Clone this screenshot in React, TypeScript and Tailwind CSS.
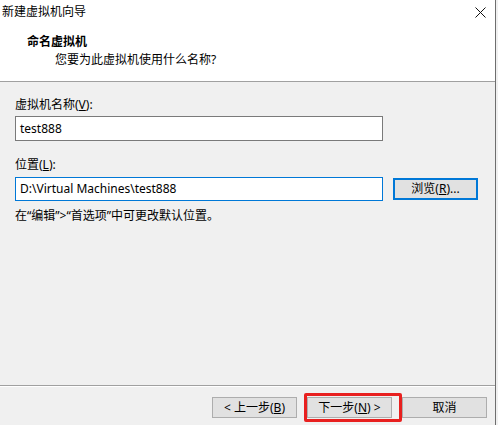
export default function App() {
  const font = 'font-["Noto_Sans","Noto_Sans_CJK_SC",sans-serif]';
  const btn =
    "h-[21px] w-[85px] bg-[#e1e1e1] border border-[#adadad] flex items-center justify-center text-[12px] text-black leading-none";

  return (
    <div className={`w-[498px] h-[425px] flex bg-[#f0f0f0] text-[12px] text-black ${font}`}>
      <div className="flex-1 flex flex-col">
        {/* Title + header */}
        <div className="h-[81px] bg-white flex flex-col">
          <div className="h-[24px] flex items-center justify-between pl-[2px] pr-[9px]">
            <span className="leading-none">新建虚拟机向导</span>
            <svg width="11" height="11" viewBox="0 0 11 11" className="mt-[1px]">
              <path d="M0.5 0.5 L10.5 10.5 M10.5 0.5 L0.5 10.5" stroke="#111" strokeWidth="1" />
            </svg>
          </div>
          <div className="pl-[27px] pt-[10px] font-bold leading-[16px]">命名虚拟机</div>
          <div className="pl-[55px] pt-[2px] leading-[16px]">您要为此虚拟机使用什么名称?</div>
        </div>
        <div className="h-px bg-[#a0a0a0]" />

        {/* Body */}
        <div className="flex-1 px-[15px] flex flex-col">
          <div className="mt-[15px] leading-[16px]">
            虚拟机名称(<span className="underline">V</span>):
          </div>
          <div className="mt-[3px] w-[368px] h-[25px] bg-white border border-[#7a7a7a] flex items-center px-[4px] leading-none">
            test888
          </div>
          <div className="mt-[16px] leading-[16px]">
            位置(<span className="underline">L</span>):
          </div>
          <div className="mt-[4px] flex items-center">
            <div className="w-[368px] h-[24px] bg-white border border-[#0078d7] flex items-center px-[4px] leading-none">
              D:\Virtual Machines\test888
            </div>
            <div className="ml-[10px] w-[85px] h-[22px] bg-[#e1e1e1] border-2 border-[#0078d7] flex items-center justify-center leading-none">
              浏览(<span className="underline">R</span>)...
            </div>
          </div>
          <div className="mt-[7px] leading-[16px]">在“编辑”&gt;“首选项”中可更改默认位置。</div>
        </div>

        {/* Footer */}
        <div className="h-px bg-[#a0a0a0]" />
        <div className="h-px bg-white" />
        <div className="h-[38px] flex items-start justify-end pr-[8px] pt-[10px] gap-[10px]">
          <div className={btn}>
            &lt; 上一步(<span className="underline">B</span>)
          </div>
          <div className="relative">
            <div className={btn}>
              下一步(<span className="underline">N</span>) &gt;
            </div>
            <div className="absolute left-[-3px] top-[-4px] w-[98px] h-[29px] border-[3px] border-[#e8201f] rounded-[2px]" />
          </div>
          <div className={btn}>取消</div>
        </div>
      </div>
      <div className="w-px bg-[#6e6e6e]" />
      <div className="w-[2px] bg-[#f0f0f0]" />
    </div>
  );
}
